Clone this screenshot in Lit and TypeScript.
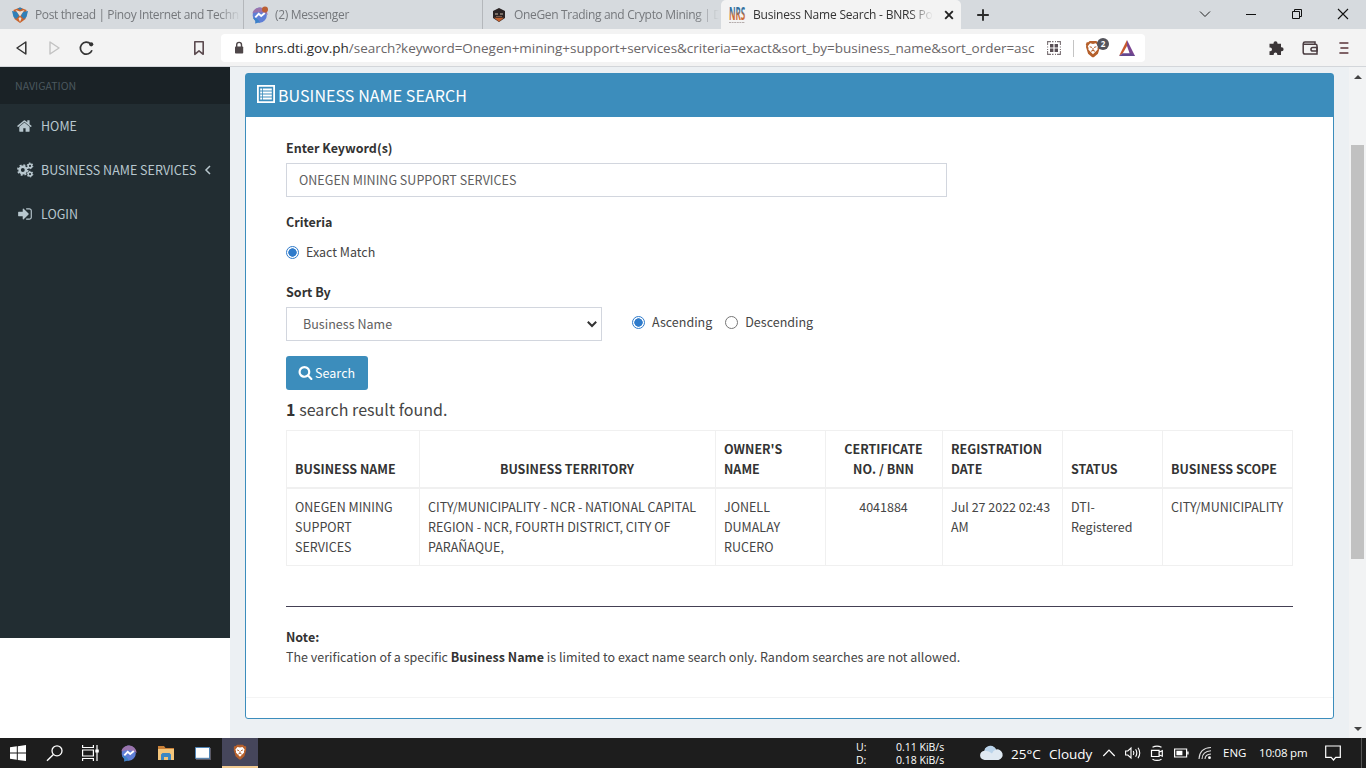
import { css, html, LitElement, svg } from 'lit';
import { customElement, property } from 'lit/decorators.js';
import { classMap } from 'lit/directives/class-map.js';

const BRAVE_LION = svg`
  <path fill="#b5602c" d="M4.5 1h7l1.5 1.5 1.6-.1 1 2.4-.5 1.2.3 1.4-2.2 7L8.800 18.300h-1.600L2.800 14.400.6 7.400l.3-1.400L.4 4.800l1-2.400 1.600.1z"/>
  <path fill="#fff" d="M5 3.500l3 .6 3-.6 2.500 3-.8 2 .2 1.500-2 2.200L8 15l-2.900-2.800-2-2.200.2-1.500-.8-2z"/>
  <path fill="none" stroke="#b5602c" stroke-width="1.100" d="M4.500 7l2.300 1M11.500 7l-2.300 1M8 8.500v2.300M6 12l2-1.200 2 1.200"/>
`;

const MESSENGER = svg`
  <path fill="#5f7fd6" d="M8 .5a7.700 7.700 0 0 1 0 15.300l-2-.3-2.600 1V14A7.700 7.700 0 0 1 8 .5z"/>
  <path fill="#9a74ad" d="M8 .5a7.600 7.600 0 0 1 7.700 7.500c-2-2-9-4-15.300-1.500C1 3 4 .5 8 .5z"/>
  <path fill="#3c83c8" d="M1 11q4-1 7 4.700l-2-.2-2.600 1V14z"/>
  <path fill="none" stroke="#fff" stroke-width="1.900" d="M3.300 10.300l3.400-3.500 2.500 2.200 3.600-2.900"/>
`;

const ICONS = {
  back: svg`<path fill="none" stroke="#333" stroke-width="1.500" stroke-linejoin="round" d="M10.800 2v12L2 8z"/>`,
  forward: svg`<path fill="none" stroke="#c2c2c2" stroke-width="1.400" stroke-linejoin="round" d="M3 2v12l9-6z"/>`,
  reload: svg`<path fill="none" stroke="#333" stroke-width="1.700" d="M13 10.300A6 6 0 1 1 11.700 4"/><circle cx="12.200" cy="4.300" r="2.100" fill="#333"/>`,
  bookmark: svg`<path fill="none" stroke="#5b4a4f" stroke-width="1.600" stroke-linejoin="round" d="M3.800 1.700h8.400v12.600L8 10.800l-4.200 3.500z"/>`,
  lock: svg`<rect x="4" y="6.500" width="8.200" height="7" rx=".8" fill="#4e4749"/><path fill="none" stroke="#4e4749" stroke-width="1.400" d="M5.700 7V4.800a2.400 2.400 0 0 1 4.800 0V7"/>`,
  qr: svg`<path fill="none" stroke="#7b7276" stroke-width="1.100" d="M1.600 5V1.600H5M11 1.600h3.400V5M14.400 11v3.400H11M5 14.400H1.600V11M6 1.600h1.500M9 1.600h1M6 14.400h1.500M9 14.400h1M1.600 6.500v1M1.600 9v1M14.400 6.500v1M14.400 9v1"/><path fill="#594f55" d="M4 4h3.400v3.400H4zM8.600 4H12v3.400H8.600zM4 8.600h3.400V12H4zM8.600 8.600H12V12H8.600z"/>`,
  reward: svg`<path fill="#7a4590" d="M8 0l8 16h-4.400L8 6z"/><path fill="#c7592e" d="M8 0L0 16l3.800-2.700L8 6z"/><path fill="#63478f" d="M0 16h16l-4-2.700H3.800z"/>`,
  puzzle: svg`<path fill="#3a3537" d="M1.500 3.800h4V3.300a2 2 0 1 1 4 0v.5H13v3.500h.6a2 2 0 1 1 0 4H13V15H9.300v-.8a1.800 1.800 0 0 0-3.600 0v.8H1.500v-3.800h.7a1.800 1.800 0 0 0 0-3.600h-.7z"/>`,
  wallet: svg`<path fill="none" stroke="#4a3c40" stroke-width="1.500" d="M15 5.500V14H3a1.800 1.800 0 0 1-1.800-1.800V3.700A1.800 1.800 0 0 1 3 2h10v2M1.500 4.200h12A1.500 1.500 0 0 1 15 5.700"/><path fill="none" stroke="#4a3c40" stroke-width="1.500" d="M15 7.400h-4.200a1.800 1.800 0 0 0 0 3.700H15z"/>`,
  menu: svg`<path stroke="#5a3338" stroke-width="1.700" d="M3.400 3h9M4.400 8h8M3.400 13h9"/>`,
  close: svg`<path stroke="#222" stroke-width="1.900" d="M4.200 4.200l7.600 7.600M11.800 4.200l-7.600 7.600"/>`,
  plus: svg`<path stroke="#2b2b2b" stroke-width="1.900" d="M8 2.200v11.600M2.200 8h11.600"/>`,
  winDown: svg`<path fill="none" stroke="#222" d="M3 5.500l5 5 5-5"/>`,
  winMin: svg`<path stroke="#111" d="M3 8.500h10"/>`,
  winMax: svg`<path fill="none" stroke="#111" d="M3.500 5.500h7v7h-7zM5.500 5.500v-2h7v7h-2"/>`,
  winClose: svg`<path stroke="#111" stroke-width="1.100" d="M3 3l10 10M13 3L3 13"/>`,
  forum: svg`
    <path fill="#c9632c" d="M8 .5l6.500 2.500-1 9L8 16l-5.500-4-1-9z"/>
    <path fill="#2f7fb8" d="M0 4l5.500 1 1.500 4-3 3-2.500-2zM16 4l-5.500 1L9 9l3 3 2.500-2z"/>
    <path fill="#e8e0d8" d="M3.500 3L8 4.500 12.500 3 10 6.500 8 9.500 6 6.500z"/>
    <path fill="#2f7fb8" d="M5.500 1.500L8 .5l2.500 1L8 3z"/><path fill="#e8e0d8" d="M6.500 11.500L8 10l1.500 1.500L8 15z"/>`,
  messenger: MESSENGER,
  messengerTab: svg`${MESSENGER}<circle cx="13" cy="2.500" r="3" fill="#bb5f33"/>`,
  onegen: svg`<path fill="#2b2425" d="M8 1l6 3v7l-6 4-6-4V4z"/><path fill="#c2602f" d="M3 10.800h10L8 14.800z"/><path stroke="#c9b8a8" stroke-width="1.200" d="M4 7h3M9 7h3"/><path stroke="#7a5a4c" d="M5 9.500h6"/>`,
  bnrs: svg`
    <linearGradient id="g" x2="0" y2="1"><stop offset=".35" stop-color="#35709f"/><stop offset=".6" stop-color="#cb6c38"/></linearGradient>
    <text x="0" y="13" textLength="16" lengthAdjust="spacingAndGlyphs" fill="url(#g)" font-family="Open Sans, sans-serif" font-size="17" font-weight="700">NRS</text>
    <path stroke="#b5adad" d="M0 15.500h16" stroke-dasharray="2 .6"/>`,
  brave: BRAVE_LION,
  home: svg`<path fill="currentColor" d="M1408 992v480q0 26-19 45t-45 19H960v-384H704v384H320q-26 0-45-19t-19-45V992q0-1 .5-3t.5-3l575-474 575 474q1 2 1 6zm223-69l-62 74q-8 9-21 11h-3q-13 0-21-7L832 424l-692 577q-12 8-24 7-13-2-21-11l-62-74q-8-10-7-23.500t11-21.500l719-599q32-26 76-26t76 26l244 204V288q0-14 9-23t23-9h192q14 0 23 9t9 23v408l219 182q10 8 11 21.500t-7 23.500z"/>`,
  cogs: svg`<g fill="none" stroke="currentColor">
    <circle cx="5.800" cy="8" r="3.200" stroke-width="2.500"/>
    <circle cx="5.800" cy="8" r="4.900" stroke-width="1.700" stroke-dasharray="1.950 1.900"/>
    <circle cx="13" cy="3.900" r="1.800" stroke-width="1.500"/>
    <circle cx="13" cy="3.900" r="2.800" stroke-width="1.100" stroke-dasharray="1.470 1.460"/>
    <circle cx="13" cy="12.100" r="1.800" stroke-width="1.500"/>
    <circle cx="13" cy="12.100" r="2.800" stroke-width="1.100" stroke-dasharray="1.470 1.460"/>
  </g>`,
  login: svg`<path fill="currentColor" d="M1312 896q0 26-19 45l-544 544q-19 19-45 19t-45-19-19-45v-288H192q-26 0-45-19t-19-45V704q0-26 19-45t45-19h448V352q0-26 19-45t45-19 45 19l544 544q19 19 19 45zm352-352v704q0 119-84.500 203.500T1376 1536h-320q-13 0-22.500-9.500t-9.500-22.500q0-4-1-20t-.5-26.500 3-23.500 10-19.500 20.500-6.500h320q66 0 113-47t47-113V544q0-66-47-113t-113-47h-312l-11.500-1-11.500-3-8-5.500-7-9-2-13.500q0-4-1-20t-.5-26.500 3-23.500 10-19.500 20.500-6.500h320q119 0 203.500 84.500T1664 544z"/>`,
  search: svg`<path fill="currentColor" d="M1216 832q0-185-131.500-316.500T768 384 451.500 515.500 320 832t131.500 316.500T768 1280t316.500-131.500T1216 832zm512 832q0 52-38 90t-90 38q-54 0-90-38l-343-342q-179 124-399 124-143 0-273.500-55.500t-225-150-150-225T64 832t55.500-273.500 150-225 225-150T768 128t273.500 55.500 225 150 150 225T1472 832q0 220-124 399l343 343q37 37 37 90z"/>`,
  angle: svg`<path fill="none" stroke="currentColor" stroke-width="1.500" d="M10 4L6 8l4 4"/>`,
  list: svg`<path fill="none" stroke="#fff" stroke-width="1.800" d="M.9.9h16.200v16.200H.9z"/><path stroke="#fff" stroke-width="2" d="M3.200 4.500H5M3.200 7.500H5M3.200 10.500H5M3.200 13.500H5M5.800 4.500h9M5.800 7.500h9M5.800 10.500h9M5.800 13.500h9"/>`,
  caret: svg`<path fill="none" stroke="#333" stroke-width="2" d="M3.800 5.800L8 10l4.200-4.200"/>`,
  windows: svg`<path fill="#fff" d="M0 2.300l6.800-1v6.300H0zM7.800 1.200L16 0v7.600H7.800zM0 8.500h6.800v6.300L0 13.800zM7.800 8.500H16V16l-8.200-1.100z"/>`,
  find: svg`<circle cx="10" cy="5.800" r="5" fill="none" stroke="#fff" stroke-width="1.300"/><path stroke="#fff" stroke-width="1.400" d="M6.400 9.400L0 15.700"/>`,
  taskView: svg`<path fill="none" stroke="#fff" stroke-width="1.200" d="M-1.400 0v2.500H9.400V0M-1.400 16v-2.500H9.400V16M-1.400 5H9.400v6H-1.400zM13 0v16"/><path fill="#fff" d="M11.300 4.500h3.500v3h-3.500z"/>`,
  folder: svg`<path fill="#c98038" d="M0 1h6l1.500 2H16v3H0z"/><path fill="#f3c57b" d="M0 4h16v11H0z"/><path fill="#3b87c4" d="M3 15V9.500L4.500 8h7L13 9.500V15h-3v-3H6v3z"/>`,
  appWindow: svg`<path fill="#5b5a66" d="M1 3h15v12H1z"/><path fill="#fff" stroke="#4f84b6" d="M.5 2.500h14v10.800H.5z"/>`,
  cloud: svg`<path fill="#dfe9f2" d="M5 15a4.600 4.600 0 0 1-.6-9.200A6.400 6.400 0 0 1 16 4.500 5.300 5.300 0 0 1 18.500 15z"/><path fill="#b9d3ea" d="M5 3.500A6.400 6.400 0 0 1 16 4.500q-3 1-4 4-3-3-7.600-2.700z"/>`,
  up: svg`<path fill="none" stroke="#fff" stroke-width="1.200" d="M2.300 11L8 5.200l5.700 5.800"/>`,
  volume: svg`<path fill="none" stroke="#fff" stroke-width="1.100" d="M.6 6h2.200L6 3v10L2.800 10H.6zM8.300 6q1.200 2 0 4M10.600 4.300q2.400 3.700 0 7.400M13 2.800q3.500 5.200 0 10.400"/>`,
  camera: svg`<path fill="none" stroke="#fff" stroke-width="1.200" d="M2.500 5.300h7.600v6.200H2.500zM10.500 7l2.800-1.400v5.600L10.500 10M3.500 2.300q4.500-2.500 9 0M3.500 14.200q4.500 2.500 9 0"/>`,
  battery: svg`<path fill="none" stroke="#fff" stroke-width="1.200" d="M1.600 4h12v8h-12z"/><path fill="#fff" d="M3.400 5.800h6v4.400h-6zM14.200 6.500h1.400v3h-1.400z"/>`,
  wifi: svg`<path fill="none" stroke="#ddd" stroke-width="1.100" d="M2 14Q2.500 3 14 2.500M5 14q.3-7.700 9-8.200M8 14q.2-4.600 6-5"/><circle cx="12.500" cy="12.700" r="1.400" fill="#fff"/>`,
  notice: svg`<path fill="none" stroke="#fff" stroke-width="1.200" d="M.7 1h14.600v11.400h-4.600L8.500 15l-2.300-2.600H.7z"/>`,
};

const TABS = [
  { icon: 'forum', title: 'Post thread | Pinoy Internet and Techn' },
  { icon: 'messengerTab', title: '(2) Messenger' },
  { icon: 'onegen', title: 'OneGen Trading and Crypto Mining | D' },
  { icon: 'bnrs', title: 'Business Name Search - BNRS Po', active: true },
];

const COLUMNS = [
  { title: 'BUSINESS NAME', value: 'ONEGEN MINING SUPPORT SERVICES', width: 133 },
  { title: 'BUSINESS TERRITORY', value: 'CITY/MUNICIPALITY - NCR - NATIONAL CAPITAL REGION - NCR, FOURTH DISTRICT, CITY OF PARAÑAQUE,', width: 296, centerTitle: true },
  { title: "OWNER'S NAME", value: 'JONELL DUMALAY RUCERO', width: 110 },
  { title: 'CERTIFICATE NO. / BNN', value: '4041884', width: 117, centerTitle: true, centerValue: true },
  { title: 'REGISTRATION DATE', value: 'Jul 27 2022 02:43 AM', width: 120 },
  { title: 'STATUS', value: 'DTI-Registered', width: 100 },
  { title: 'BUSINESS SCOPE', value: 'CITY/MUNICIPALITY', width: 130 },
];

@customElement('ui-icon')
export class UiIcon extends LitElement {

  @property() name = '';
  @property() box = '0 0 16 16';

  render () {
    return html`<svg viewBox=${this.box} aria-hidden="true">${ICONS[this.name]}</svg>`;
  }

  static styles = css`
    :host {
      display: block;
      flex: none;
      height: 16px;
      width: 16px;
    }

    svg {
      display: block;
      height: 100%;
      overflow: visible;
      width: 100%;
    }
  `;
}

@customElement('browser-chrome')
export class BrowserChrome extends LitElement {

  _renderTab (tab) {
    return html`
      <div class=${classMap({ tab: true, active: !!tab.active })}>
        <ui-icon name=${tab.icon}></ui-icon>
        <span class="title">${tab.title}</span>
        ${tab.active ? html`<ui-icon name="close"></ui-icon>` : ''}
      </div>
    `;
  }

  render () {
    return html`
      <div class="tabs">
        ${TABS.map((tab) => this._renderTab(tab))}
        <ui-icon class="new-tab" name="plus"></ui-icon>
        <div class="controls">
          ${['winDown', 'winMin', 'winMax', 'winClose'].map((name) => html`
            <span class="control"><ui-icon name=${name}></ui-icon></span>
          `)}
        </div>
      </div>
      <div class="toolbar">
        <div class="nav">
          <ui-icon name="back"></ui-icon>
          <ui-icon name="forward"></ui-icon>
          <ui-icon name="reload"></ui-icon>
        </div>
        <ui-icon name="bookmark"></ui-icon>
        <div class="address">
          <ui-icon name="lock"></ui-icon>
          <span class="url"><span class="host">bnrs.dti.gov.ph</span>/search?keyword=Onegen+mining+support+services&amp;criteria=exact&amp;sort_by=business_name&amp;sort_order=asc</span>
          <ui-icon name="qr"></ui-icon>
          <span class="shield">
            <ui-icon class="lion" name="brave" box="0 0 16 19"></ui-icon>
            <span class="badge">2</span>
          </span>
          <ui-icon name="reward"></ui-icon>
        </div>
        <div class="extensions">
          <ui-icon name="puzzle"></ui-icon>
          <ui-icon name="wallet"></ui-icon>
          <ui-icon name="menu"></ui-icon>
        </div>
      </div>
    `;
  }

  static styles = css`
    :host {
      background: #f3f3f3;
      border-bottom: 1px solid #d3d6da;
      box-sizing: border-box;
      display: block;
      font-family: "Open Sans", "Noto Sans", sans-serif;
      height: 67px;
    }

    .tabs {
      background: #d6dade;
      display: flex;
      height: 29px;
    }

    .tab {
      align-items: center;
      border-right: 1px solid #b4b7bb;
      box-sizing: border-box;
      color: #75787c;
      display: flex;
      font-size: 12px;
      gap: 7px;
      letter-spacing: -0.33px;
      padding: 0 2px 0 8px;
      width: 239px;
    }

    .tab:first-child {
      letter-spacing: -0.38px;
      padding-left: 12px;
      width: 244px;
    }

    .tab:nth-child(3) {
      border: 0;
      width: 238px;
    }

    .tab.active {
      background: #f3f3f3;
      border: 0;
      border-radius: 5px 5px 0 0;
      color: #333;
      gap: 8px;
      letter-spacing: -0.2px;
      padding-right: 4px;
      width: 240px;
    }

    .title {
      flex: 1;
      line-height: 29px;
      -webkit-mask-image: linear-gradient(90deg, #000 calc(100% - 24px), transparent);
      mask-image: linear-gradient(90deg, #000 calc(100% - 24px), transparent);
      overflow: hidden;
      white-space: nowrap;
    }

    .new-tab {
      margin: 7px 0 0 14px;
    }

    .controls {
      display: flex;
      margin-left: auto;
    }

    .control {
      align-items: center;
      display: flex;
      height: 28px;
      justify-content: center;
      width: 46px;
    }

    .toolbar {
      align-items: center;
      display: flex;
      height: 38px;
      padding-left: 15px;
    }

    .nav {
      display: flex;
      gap: 16px;
      width: 176px;
    }

    .address {
      align-items: center;
      background: #fff;
      border-radius: 4px;
      box-sizing: border-box;
      display: flex;
      height: 28px;
      margin-left: 14px;
      padding: 0 10px;
      width: 924px;
    }

    .url {
      color: #6a6668;
      font-size: 13.5px;
      letter-spacing: -0.035px;
      line-height: 26px;
      margin-left: 8px;
      white-space: nowrap;
      width: 791px;
    }

    .host {
      color: #2b2b2b;
    }

    .shield {
      border-left: 1px solid #c4c4c4;
      height: 17px;
      margin: 0 9px 0 11px;
      padding-left: 11px;
      position: relative;
      width: 25px;
    }

    .lion {
      height: 18px;
    }

    .badge {
      background: #54545c;
      border-radius: 6px;
      color: #fff;
      font-size: 8px;
      font-weight: 700;
      height: 12px;
      left: 23px;
      line-height: 12px;
      position: absolute;
      text-align: center;
      top: -2px;
      width: 12px;
    }

    .extensions {
      display: flex;
      gap: 18px;
      margin-left: auto;
      padding-right: 14px;
    }
  `;
}

@customElement('side-nav')
export class SideNav extends LitElement {

  render () {
    return html`
      <div class="header">NAVIGATION</div>
      <div class="item"><ui-icon name="home" box="0 0 1792 1792"></ui-icon>HOME</div>
      <div class="item"><ui-icon name="cogs"></ui-icon>BUSINESS NAME SERVICES<ui-icon class="angle" name="angle"></ui-icon></div>
      <div class="item"><ui-icon name="login" box="0 0 1792 1792"></ui-icon>LOGIN</div>
    `;
  }

  static styles = css`
    :host {
      background: #222d32;
      color: #b8c7ce;
      display: block;
      height: 571px;
      width: 230px;
    }

    .header {
      background: #1a2226;
      color: #4b585e;
      font-size: 10.6px;
      height: 37px;
      line-height: 37px;
      padding-left: 15px;
    }

    .item {
      align-items: center;
      display: flex;
      height: 44px;
      line-height: 20px;
      padding-left: 17px;
    }

    .item ui-icon {
      margin-right: 8px;
    }

    .item .angle {
      margin: 0 0 0 3px;
    }
  `;
}

@customElement('search-panel')
export class SearchPanel extends LitElement {

  render () {
    return html`
      <div class="heading"><ui-icon name="list" box="0 0 18 18"></ui-icon>BUSINESS NAME SEARCH</div>
      <div class="body">
        <div class="label">Enter Keyword(s)</div>
        <div class="input">ONEGEN MINING SUPPORT SERVICES</div>
        <div class="label criteria">Criteria</div>
        <div class="option exact"><span class="radio on"></span>Exact Match</div>
        <div class="label">Sort By</div>
        <div class="sort">
          <div class="input select">Business Name<ui-icon name="caret"></ui-icon></div>
          <div class="option"><span class="radio on"></span>Ascending</div>
          <div class="option"><span class="radio"></span>Descending</div>
        </div>
        <div class="button"><ui-icon name="search" box="0 0 1792 1792"></ui-icon>Search</div>
        <div class="found"><b>1</b> search result found.</div>
        <table>
          <colgroup>${COLUMNS.map((c) => html`<col style="width: ${c.width}px">`)}</colgroup>
          <thead>
            <tr>${COLUMNS.map((c) => html`<th class=${classMap({ center: !!c.centerTitle })}>${c.title}</th>`)}</tr>
          </thead>
          <tbody>
            <tr>${COLUMNS.map((c) => html`<td class=${classMap({ center: !!c.centerValue })}>${c.value}</td>`)}</tr>
          </tbody>
        </table>
        <div class="note">
          <b>Note:</b><br>
          The verification of a specific <b>Business Name</b> is limited to exact name search only. Random searches are not allowed.
        </div>
      </div>
      <div class="footer"></div>
    `;
  }

  static styles = css`
    :host {
      background: #fff;
      border: 1px solid #3c8dbc;
      border-radius: 3px;
      box-sizing: border-box;
      display: flex;
      flex-direction: column;
      height: 646px;
      width: 1089px;
    }

    .heading {
      align-items: center;
      background: #3c8dbc;
      color: #fff;
      display: flex;
      font-size: 16px;
      gap: 3px;
      height: 43px;
      letter-spacing: 0.07px;
      line-height: 43px;
      padding-left: 11px;
    }

    .heading ui-icon {
      height: 18px;
      margin-bottom: 3px;
      width: 18px;
    }

    .body {
      flex: 1;
      padding: 21px 40px 0;
    }

    .label,
    b,
    th {
      color: #333;
      font-weight: 700;
    }

    .label {
      height: 25px;
      line-height: 20px;
    }

    .input {
      border: 1px solid #d2d6de;
      box-sizing: border-box;
      color: #606060;
      height: 34px;
      letter-spacing: 0.03px;
      line-height: 32px;
      padding-left: 12px;
      width: 661px;
    }

    .criteria {
      margin-top: 15px;
    }

    .option {
      align-items: center;
      display: flex;
      line-height: 20px;
    }

    .exact {
      height: 20px;
      margin: 5px 0 20px;
    }

    .radio {
      border: 1px solid #767676;
      border-radius: 50%;
      box-sizing: border-box;
      height: 13px;
      margin-right: 7px;
      width: 13px;
    }

    .radio.on {
      background: radial-gradient(circle, #2f7bcb 3.900px, #fff 4.500px);
      border: 1px solid #2f7bcb;
    }

    .sort {
      display: flex;
    }

    .sort .option {
      height: 30px;
      margin-left: 13px;
    }

    .sort .select + .option {
      margin-left: 30px;
    }

    .select {
      align-items: center;
      display: flex;
      justify-content: space-between;
      padding: 0 1px 0 16px;
      width: 316px;
    }

    .button {
      align-items: center;
      background: #3c8dbc;
      border-radius: 3px;
      box-sizing: border-box;
      color: #fff;
      display: flex;
      gap: 2px;
      height: 34px;
      letter-spacing: 0.05px;
      line-height: 20px;
      margin-top: 15px;
      padding: 0 0 1px 12px;
      width: 82px;
    }

    .button ui-icon {
      height: 15px;
      width: 15px;
    }

    .found {
      font-size: 16px;
      height: 20px;
      letter-spacing: 0.05px;
      line-height: 20px;
      margin: 9px 0 11px;
    }

    table {
      border-bottom: 1px solid #f0f0f0;
      border-right: 1px solid #f0f0f0;
      border-spacing: 0;
      table-layout: fixed;
      width: 1007px;
    }

    th,
    td {
      border-left: 1px solid #f0f0f0;
      border-top: 1px solid #f0f0f0;
      line-height: 20px;
      padding: 8px;
      text-align: left;
      vertical-align: top;
    }

    td:first-child {
      padding-right: 20px;
    }

    th {
      border-bottom: 1px solid #f0f0f0;
      vertical-align: bottom;
    }

    th.center,
    td.center {
      padding-right: 9px;
      text-align: center;
    }

    .note {
      border-top: 1px solid #444054;
      letter-spacing: 0.01px;
      line-height: 20px;
      margin-top: 40px;
      padding-top: 20px;
      white-space: nowrap;
    }

    .footer {
      border-top: 1px solid #f4f4f4;
      height: 20px;
    }
  `;
}

@customElement('task-bar')
export class TaskBar extends LitElement {

  render () {
    return html`
      <div class="apps">
        ${['windows', 'find', 'taskView', 'messenger', 'folder', 'appWindow'].map((name) => html`
          <span class="app"><ui-icon name=${name}></ui-icon></span>
        `)}
        <span class="app active"><ui-icon name="brave" box="0 0 16 19"></ui-icon></span>
      </div>
      <div class="net"><span>U:</span><span>0.11 KiB/s</span><span>D:</span><span>0.18 KiB/s</span></div>
      <ui-icon class="cloud" name="cloud" box="0 0 24 16"></ui-icon>
      <span class="weather"><span class="temp">25°C</span>Cloudy</span>
      <div class="tray">
        ${['up', 'volume', 'camera', 'battery', 'wifi'].map((name) => html`<ui-icon name=${name}></ui-icon>`)}
      </div>
      <span class="lang">ENG</span>
      <span class="clock">10:08 pm</span>
      <ui-icon name="notice"></ui-icon>
      <span class="peek"></span>
    `;
  }

  static styles = css`
    :host {
      align-items: center;
      background: #1d1d1d;
      color: #fff;
      display: flex;
      font-family: "Open Sans", "Noto Sans", sans-serif;
      height: 30px;
      white-space: nowrap;
    }

    .apps {
      display: flex;
      width: 856px;
    }

    .app {
      align-items: center;
      box-sizing: border-box;
      display: flex;
      height: 30px;
      justify-content: center;
      width: 37px;
    }

    .app:first-child {
      width: 36px;
    }

    .active {
      background: #46465b;
      border-bottom: 2px solid #f2cb91;
      margin-left: 1px;
      width: 36px;
    }

    .net {
      display: grid;
      font-size: 10.5px;
      grid-template-columns: 40px 84px;
      line-height: 13px;
      padding-top: 1px;
    }

    .cloud {
      width: 24px;
    }

    .weather {
      font-size: 13.5px;
      line-height: 20px;
      margin-left: 7px;
      padding-top: 1px;
      width: 86px;
    }

    .temp {
      display: inline-block;
      width: 38px;
    }

    .tray {
      display: flex;
      gap: 8px;
      margin-left: 4px;
      width: 122px;
    }

    .lang {
      font-size: 11.5px;
      line-height: 20px;
      padding-bottom: 1px;
      width: 36px;
    }

    .clock {
      font-size: 11.5px;
      letter-spacing: -0.2px;
      line-height: 20px;
      padding-bottom: 1px;
      width: 66px;
    }

    .peek {
      border-left: 1px solid #555;
      height: 30px;
      margin-left: 20px;
    }
  `;
}

@customElement('app-root')
export class AppRoot extends LitElement {

  render () {
    return html`
      <browser-chrome></browser-chrome>
      <div class="page">
        <side-nav></side-nav>
        <div class="content"><search-panel></search-panel></div>
        <div class="scrollbar">
          <span class="arrow up"></span>
          <span class="thumb"></span>
          <span class="arrow down"></span>
        </div>
      </div>
      <task-bar></task-bar>
    `;
  }

  static styles = css`
    :host {
      background: #fff;
      color: #454545;
      display: block;
      /* The CJK family carries the Source Sans latin glyphs */
      font-family: "Noto Sans CJK SC", "Source Sans Pro", sans-serif;
      font-size: 12.500px;
      height: 768px;
      overflow: hidden;
      width: 1366px;
    }

    .page {
      display: flex;
      height: 671px;
    }

    .content {
      background: #ecf0f3;
      flex: 1;
      padding: 6px 15px 0;
    }

    .scrollbar {
      align-items: center;
      background: #f2f3f4;
      box-sizing: border-box;
      display: flex;
      flex-direction: column;
      padding: 8px 0 7px;
      width: 17px;
    }

    .arrow {
      border: 4px solid transparent;
    }

    .up {
      border-bottom-color: #444;
      border-top: 0;
    }

    .down {
      border-bottom: 0;
      border-top-color: #444;
      margin-top: auto;
    }

    .thumb {
      background: #c1c1c1;
      height: 414px;
      margin-top: 66px;
      width: 13px;
    }
  `;
}
